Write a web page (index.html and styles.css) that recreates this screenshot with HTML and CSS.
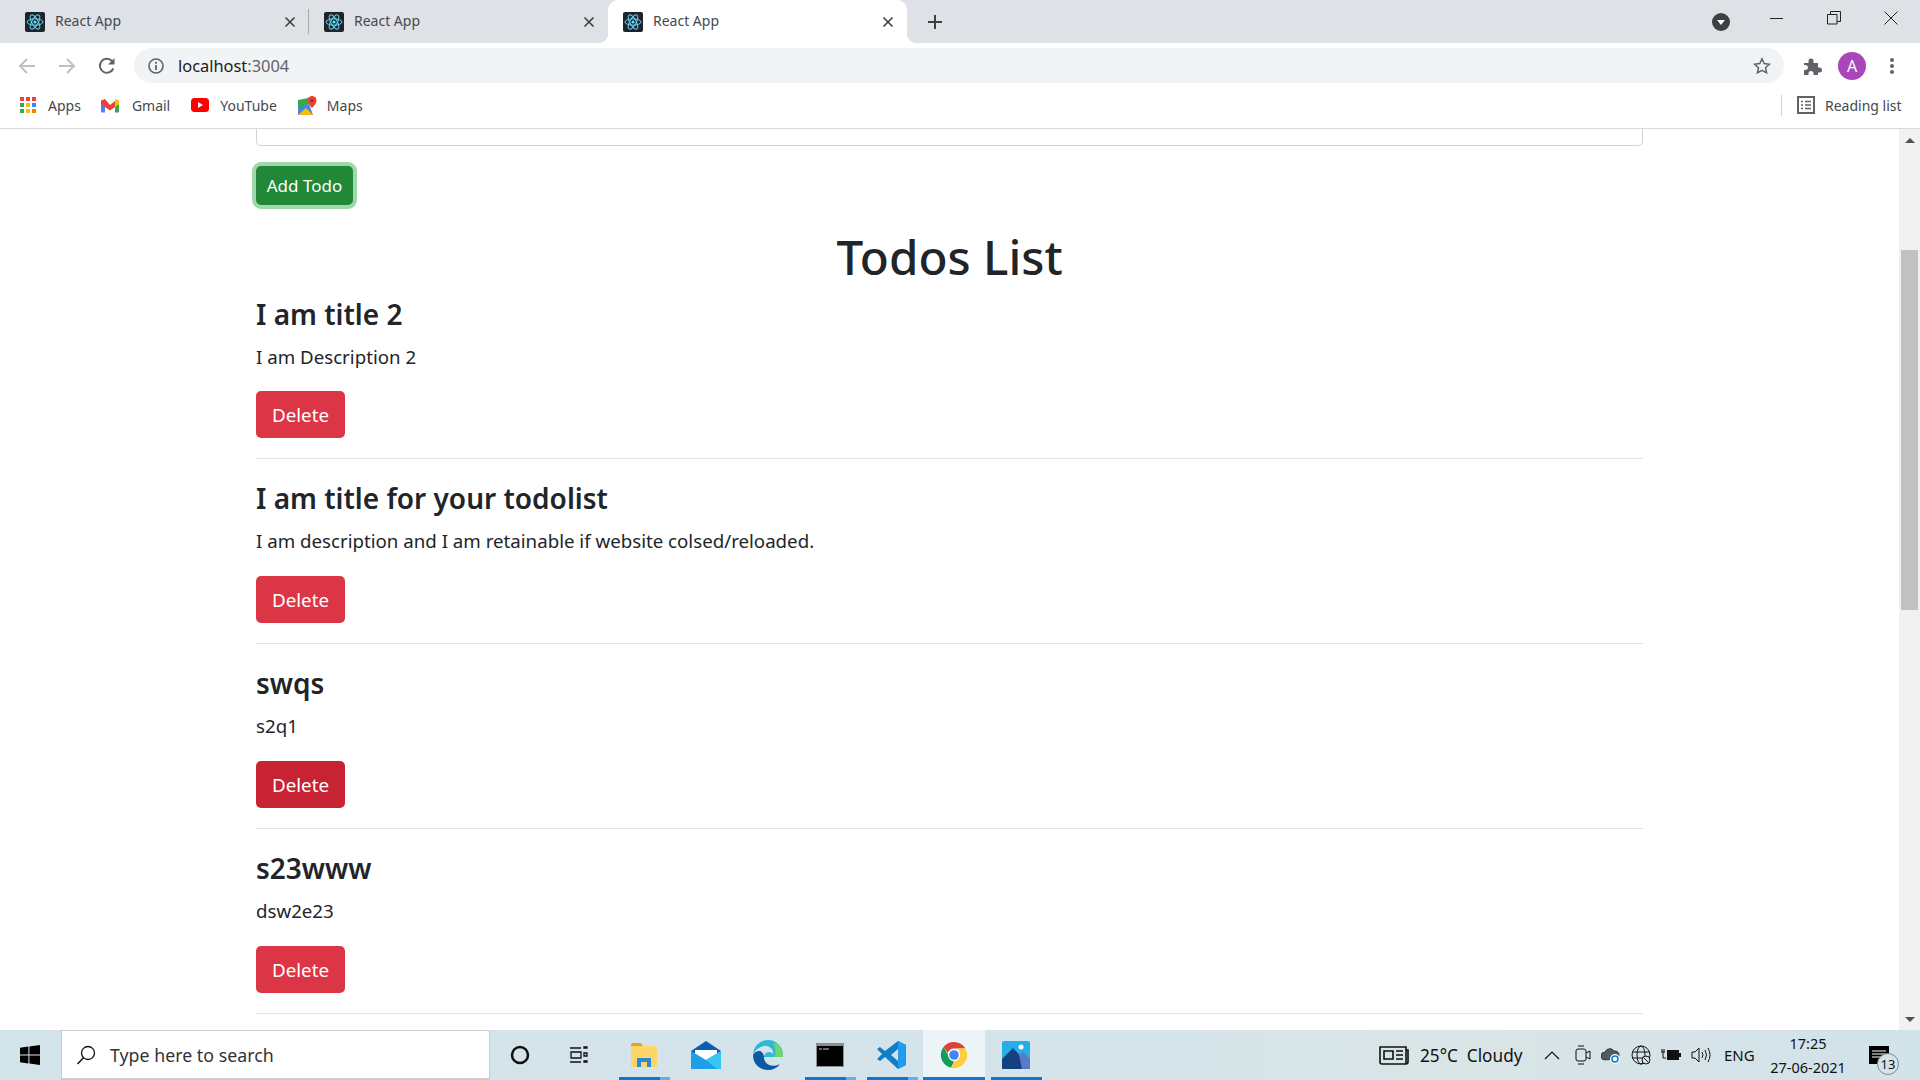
FILE: index.html
```html
<!DOCTYPE html>
<html lang="en">
<head>
  <meta charset="utf-8" />
  <title>React App</title>
  <link rel="stylesheet" href="styles.css">
</head>
<body>
  <svg class="defs" width="0" height="0">
    <symbol id="react" viewBox="0 0 20 20">
      <rect width="20" height="20" rx="2" fill="#20232a"/>
      <g fill="none" stroke="#61dafb" stroke-width="1">
        <ellipse cx="10" cy="10" rx="8" ry="3.2"/>
        <ellipse cx="10" cy="10" rx="8" ry="3.2" transform="rotate(60 10 10)"/>
        <ellipse cx="10" cy="10" rx="8" ry="3.2" transform="rotate(120 10 10)"/>
      </g>
      <circle cx="10" cy="10" r="1.6" fill="#61dafb"/>
    </symbol>
    <symbol id="tab-x" viewBox="0 0 12 12">
      <path d="M1.5 1.5l9 9M10.500 1.500l-9 9" stroke="#3c4043" stroke-width="1.6" fill="none"/>
    </symbol>
  </svg>

  <div class="tabstrip">
    <div class="tab tab-sep">
      <svg class="favicon"><use href="#react"/></svg>
      <span class="tab-title">React App</span>
      <svg class="tab-close"><use href="#tab-x"/></svg>
    </div>
    <div class="tab">
      <svg class="favicon"><use href="#react"/></svg>
      <span class="tab-title">React App</span>
      <svg class="tab-close"><use href="#tab-x"/></svg>
    </div>
    <div class="tab tab-active">
      <svg class="favicon"><use href="#react"/></svg>
      <span class="tab-title">React App</span>
      <svg class="tab-close"><use href="#tab-x"/></svg>
    </div>
    <svg class="new-tab" width="14" height="14" viewBox="0 0 14 14"><path d="M7 0v14M0 7h14" stroke="#3c4043" stroke-width="2"/></svg>
    <svg class="tab-search" width="18" height="18" viewBox="0 0 18 18"><circle cx="9" cy="9" r="9" fill="#3c4043"/><path d="M5 7h8l-4 5z" fill="#fff"/></svg>
    <div class="win-controls">
      <svg width="14" height="14" viewBox="0 0 14 14"><path d="M0 7.500h13" stroke="#222" stroke-width="1"/></svg>
      <svg width="14" height="14" viewBox="0 0 14 14"><path d="M.5 3.500h9.500v9.500h-9.500zM3.500 3.500v-3h10v10h-3.500" fill="none" stroke="#222" stroke-width="1"/></svg>
      <svg width="14" height="14" viewBox="0 0 14 14"><path d="M.5.500l13 13M13.500.500l-13 13" stroke="#222" stroke-width="1"/></svg>
    </div>
  </div>

  <div class="toolbar">
    <svg class="nav-icon" width="18" height="18" viewBox="0 0 18 18"><path d="M17 9H2M9 2L2 9l7 7" fill="none" stroke="#bdc1c6" stroke-width="2"/></svg>
    <svg class="nav-icon" width="18" height="18" viewBox="0 0 18 18"><path d="M1 9h15M9 2l7 7-7 7" fill="none" stroke="#bdc1c6" stroke-width="2"/></svg>
    <svg class="nav-icon" width="18" height="18" viewBox="0 0 18 18"><path d="M15.300 11.500A7 7 0 1 1 14 4l1.500 1.500" fill="none" stroke="#5f6368" stroke-width="2"/><path d="M16.500 1v6.500H10z" fill="#5f6368"/></svg>
    <div class="omnibox">
      <svg width="16" height="16" viewBox="0 0 16 16"><circle cx="8" cy="8" r="7" fill="none" stroke="#5f6368" stroke-width="1.6"/><path d="M8 7v5" stroke="#5f6368" stroke-width="1.800"/><circle cx="8" cy="4.800" r="1.100" fill="#5f6368"/></svg>
      <span class="url">localhost<span class="url-port">:3004</span></span>
      <svg class="star" width="18" height="18" viewBox="0 0 18 18"><path d="M9 1.800l2.200 4.800 5.200.600-3.900 3.500 1.100 5.200L9 13.300l-4.600 2.600 1.100-5.200L1.600 7.200l5.200-.600z" fill="none" stroke="#5f6368" stroke-width="1.500"/></svg>
    </div>
    <svg class="puzzle" width="20" height="20" viewBox="0 0 20 20"><path d="M1 7h4.500V5a2.500 2.500 0 0 1 5 0v2H15v4.500h1.500a2.500 2.500 0 0 1 0 5H15V19h-4.500v-1.500a2.500 2.500 0 0 0-5 0V19H1v-5h1.500a2.500 2.500 0 0 0 0-5H1z" fill="#5f6368"/></svg>
    <div class="avatar">A</div>
    <svg class="menu-dots" width="4" height="18" viewBox="0 0 4 18"><circle cx="2" cy="3" r="2" fill="#5f6368"/><circle cx="2" cy="9" r="2" fill="#5f6368"/><circle cx="2" cy="15" r="2" fill="#5f6368"/></svg>
  </div>

  <div class="bookmarks">
    <div class="bm bm-apps">
      <svg width="16" height="16" viewBox="0 0 16 16">
        <g fill="#ea4335"><rect width="4" height="4"/><rect x="6" width="4" height="4"/><rect x="12" width="4" height="4"/></g>
        <g><rect y="6" width="4" height="4" fill="#34a853"/><rect x="6" y="6" width="4" height="4" fill="#fbbc04"/><rect x="12" y="6" width="4" height="4" fill="#4285f4"/></g>
        <g><rect y="12" width="4" height="4" fill="#34a853"/><rect x="6" y="12" width="4" height="4" fill="#fbbc04"/><rect x="12" y="12" width="4" height="4" fill="#ea8600"/></g>
      </svg>
      <span>Apps</span>
    </div>
    <div class="bm bm-gmail">
      <svg width="18" height="15" viewBox="0 0 18 15">
        <path d="M0 2.500v11a1 1 0 0 0 1 1h3V6z" fill="#4285f4"/>
        <path d="M18 2.500v11a1 1 0 0 1-1 1h-3V6z" fill="#34a853"/>
        <path d="M14 1l4 1.500V6l-4 3z" fill="#fbbc04"/>
        <path d="M4 1L0 2.500V6l4 3 5 3.500L14 9V3L9 7z" fill="#ea4335"/>
      </svg>
      <span>Gmail</span>
    </div>
    <div class="bm bm-yt">
      <svg width="18" height="14" viewBox="0 0 18 14"><rect width="18" height="14" rx="3.500" fill="#f00"/><path d="M7 4l5 3-5 3z" fill="#fff"/></svg>
      <span>YouTube</span>
    </div>
    <div class="bm bm-maps">
      <svg width="19" height="19" viewBox="0 0 19 19">
        <path d="M0 4l10-2 3 4-13 10z" fill="#34a853"/>
        <path d="M0 13L11 8l4 11H0z" fill="#4285f4"/>
        <path d="M0 19l8-7 7 7z" fill="#fbbc04"/>
        <path d="M14 0a4.500 4.500 0 0 1 4.500 4.500C18.500 8 14 12 14 12S9.500 8 9.500 4.500A4.500 4.500 0 0 1 14 0z" fill="#ea4335"/>
        <circle cx="14" cy="4.500" r="1.500" fill="#a52714"/>
      </svg>
      <span>Maps</span>
    </div>
    <div class="reading">
      <svg width="18" height="18" viewBox="0 0 18 18"><rect x="1" y="1" width="16" height="16" fill="none" stroke="#5f6368" stroke-width="2"/><path d="M4 5.500h2M8 5.500h6M4 9h2M8 9h6M4 12.500h2M8 12.500h6" stroke="#5f6368" stroke-width="1.500"/></svg>
      <span>Reading list</span>
    </div>
  </div>

  <div class="viewport">
    <div class="page">
      <div class="todo-input"></div>
      <button class="btn btn-add">Add Todo</button>
      <h1 class="list-title">Todos List</h1>

      <div class="todo">
        <h4>I am title 2</h4>
        <p>I am Description 2</p>
        <button class="btn btn-delete">Delete</button>
      </div>
      <div class="todo">
        <h4>I am title for your todolist</h4>
        <p>I am description and I am retainable if website colsed/reloaded.</p>
        <button class="btn btn-delete">Delete</button>
      </div>
      <div class="todo">
        <h4>swqs</h4>
        <p>s2q1</p>
        <button class="btn btn-delete btn-hover">Delete</button>
      </div>
      <div class="todo">
        <h4>s23www</h4>
        <p>dsw2e23</p>
        <button class="btn btn-delete">Delete</button>
      </div>
    </div>
    <div class="scrollbar">
      <div class="sb-up"></div>
      <div class="sb-thumb"></div>
      <div class="sb-down"></div>
    </div>
  </div>

  <div class="taskbar">
    <svg class="start" width="20" height="20" viewBox="0 0 20 20"><path d="M0 2.800l8.400-1.200v8H0zM9.400 1.400L20 0v9.600H9.400zM0 10.600h8.400v8L0 17.300zM9.400 10.600H20V20L9.400 18.600z" fill="#000"/></svg>
    <div class="search-box">
      <svg width="20" height="20" viewBox="0 0 20 20"><circle cx="12" cy="8" r="6.500" fill="none" stroke="#111" stroke-width="1.300"/><path d="M7.500 12.800L1.500 19" stroke="#111" stroke-width="1.500"/></svg>
      <span>Type here to search</span>
    </div>
    <div class="task task-plain">
      <svg width="20" height="20" viewBox="0 0 20 20"><circle cx="10" cy="10" r="8" fill="none" stroke="#111" stroke-width="2.500"/></svg>
    </div>
    <div class="task task-plain">
      <svg width="20" height="20" viewBox="0 0 20 20"><path d="M1 3h11M1 17h11M2 7h10v6H2zM15 2h3v1h-3zM15 8h3v3h-3zM15 16h3v1h-3z" fill="none" stroke="#111" stroke-width="1.300"/></svg>
    </div>
    <div class="task task-open task-first">
      <svg width="28" height="26" viewBox="0 0 28 26">
        <path d="M1 3a2 2 0 0 1 2-2h8l2 3H1z" fill="#e3a21a"/>
        <path d="M1 4h25a1 1 0 0 1 1 1v19a1 1 0 0 1-1 1H2a1 1 0 0 1-1-1z" fill="#fcd669"/>
        <path d="M7 25v-9h14v9h-4v-5h-6v5z" fill="#2b88d8"/>
      </svg>
    </div>
    <div class="task">
      <svg width="30" height="28" viewBox="0 0 30 28">
        <path d="M0 10L15 0l15 10v3H0z" fill="#0a5db3"/>
        <path d="M4 9h22v8l-11 6-11-6z" fill="#fff"/>
        <path d="M0 10l15 9 15-9v18H0z" fill="#1e9fe8"/>
        <path d="M15 19l15-9v18H26z" fill="#37c6f4"/>
      </svg>
    </div>
    <div class="task">
      <svg width="30" height="30" viewBox="0 0 30 30">
        <path d="M15 0a15 15 0 0 1 15 15v2H11a5 5 0 0 1 9-3c1-5-5-9-9-8C5 7 1 12 0 15A15 15 0 0 1 15 0z" fill="#2fb8d9"/>
        <path d="M20 2a14 14 0 0 1 10 13v2h-9c3-3 1-10-1-15z" fill="#6fd66b"/>
        <path d="M0 15c0 9 7 15 15 15 5 0 9-2 12-6-7 4-16 1-16-7-1-8-8-7-11-2z" fill="#0c59a4"/>
      </svg>
    </div>
    <div class="task task-open">
      <svg width="28" height="24" viewBox="0 0 28 24">
        <rect width="28" height="24" fill="#8a8f92"/>
        <rect x="1" y="3" width="26" height="20" fill="#000"/>
        <path d="M3 6h3M7 6h6" stroke="#ccc" stroke-width="1"/>
      </svg>
    </div>
    <div class="task task-open">
      <svg width="30" height="30" viewBox="0 0 30 30">
        <path d="M21 1l8 4v20l-8 4-13-12-5 4-3-2 5-5-5-5 3-2 5 4z" fill="#0e7fc4"/>
        <path d="M21 1l8 4v20l-8 4V1z" fill="#1f9cf0"/>
        <path d="M21 9l-7 6 7 6z" fill="#d4e3ea"/>
      </svg>
    </div>
    <div class="task task-active">
      <svg width="28" height="28" viewBox="0 0 28 28">
        <path d="M14 1a13 13 0 0 1 11.300 6.500H14a6.500 6.500 0 0 0-6.200 4.500L3.600 6A13 13 0 0 1 14 1z" fill="#db4437"/>
        <path d="M3.600 6L9 15.500a6.500 6.500 0 0 0 5 5l-3 6.200A13 13 0 0 1 3.600 6z" fill="#0f9d58"/>
        <path d="M25.300 7.500A13 13 0 0 1 11 26.700l5.700-9.500a6.500 6.500 0 0 0 1-9.700z" fill="#ffcd40"/>
        <circle cx="14" cy="14" r="6" fill="#fff"/>
        <circle cx="14" cy="14" r="4.800" fill="#4285f4"/>
      </svg>
    </div>
    <div class="task task-photos">
      <svg width="28" height="28" viewBox="0 0 28 28">
        <rect width="28" height="28" rx="2" fill="#25aee8"/>
        <path d="M0 28V18L11 7l10 11v10z" fill="#14427f"/>
        <path d="M17 14l4-3 7 7v10H20z" fill="#5a79c9"/>
        <circle cx="19" cy="6" r="2.500" fill="#fff"/>
      </svg>
    </div>

    <div class="tray">
      <svg class="news" width="30" height="20" viewBox="0 0 30 20"><path d="M1 2h26v17H3a2 2 0 0 1-2-2zM27 5h2v12a2 2 0 0 1-2 2" fill="none" stroke="#111" stroke-width="1.600"/><path d="M5 6h9v8H5zM17 6h7M17 10h7M17 14h7" fill="none" stroke="#111" stroke-width="1.600"/></svg>
      <span class="weather">25°C&nbsp; Cloudy</span>
      <svg class="tray-icon chevron" width="16" height="10" viewBox="0 0 16 10"><path d="M1 9l7-7 7 7" fill="none" stroke="#111" stroke-width="1.200"/></svg>
      <svg class="tray-icon" width="16" height="20" viewBox="0 0 16 20"><rect x="1" y="4" width="10" height="12" rx="2" fill="none" stroke="#111"/><path d="M11 8l4-2v8l-4-2M3 1h6M3 19h6" fill="none" stroke="#111"/></svg>
      <svg class="tray-icon" width="20" height="20" viewBox="0 0 20 20"><path d="M4 15a4 4 0 0 1 0-8 5 5 0 0 1 9-1 4 4 0 0 1 2 8z" fill="#4f5b62" stroke="#111" stroke-width=".6"/><circle cx="14" cy="14" r="5" fill="#fff"/><circle cx="14" cy="14" r="3" fill="none" stroke="#0b78d4" stroke-width="1.500"/></svg>
      <svg class="tray-icon" width="20" height="20" viewBox="0 0 20 20"><g fill="none" stroke="#111"><circle cx="10" cy="10" r="9"/><ellipse cx="10" cy="10" rx="4" ry="9"/><path d="M1.500 7h17M1.500 13h17"/></g><circle cx="15" cy="15" r="4" fill="#d4e3ea" stroke="#111"/><path d="M12.500 12.500l5 5" stroke="#111"/></svg>
      <svg class="tray-icon" width="20" height="14" viewBox="0 0 20 14"><path d="M0 4h4M1 1v3M3 1v3M2 4v6h3" fill="none" stroke="#111"/><rect x="6" y="2" width="12" height="10" fill="#111"/><rect x="18" y="5" width="2" height="4" fill="#111"/></svg>
      <svg class="tray-icon" width="20" height="18" viewBox="0 0 20 18"><path d="M1 6h3l4-4v14l-4-4H1zM11 6q2 3 0 6M14 4q3 5 0 10M17 2q4 7 0 14" fill="none" stroke="#111"/></svg>
      <span class="lang">ENG</span>
      <div class="clock"><span>17:25</span><span>27-06-2021</span></div>
      <div class="notify">
        <svg width="20" height="18" viewBox="0 0 20 18"><path d="M0 0h20v18H0z" fill="#000"/><path d="M3 5h14M3 8h14M3 11h14" stroke="#fff"/></svg>
        <span class="notify-count">13</span>
      </div>
    </div>
  </div>
</body>
</html>
```

FILE: styles.css
```css
* {
  box-sizing: border-box;
}
html, body {
  margin: 0;
  height: 100%;
}
body {
  display: flex;
  flex-direction: column;
  width: 1920px;
  height: 1080px;
  overflow: hidden;
  font-family: "Noto Sans", "Open Sans", sans-serif;
  color: #212529;
  background: #fff;
}
.defs {
  position: absolute;
}
svg {
  flex: none;
  display: block;
}

/* tab strip */
.tabstrip {
  display: flex;
  align-items: center;
  height: 43px;
  padding-left: 10px;
  background: #dee1e6;
}
.tab {
  position: relative;
  display: flex;
  align-items: center;
  align-self: stretch;
  width: 299px;
  padding: 0 13px 0 15px;
  font-size: 14px;
  color: #45494d;
}
.tab-sep::after {
  content: "";
  position: absolute;
  right: 0;
  top: 9px;
  width: 1px;
  height: 25px;
  background: #a7a9ad;
}
.tab-active {
  background: #fff;
  border-radius: 10px 10px 0 0;
}
.tab-active::before,
.tab-active::after {
  content: "";
  position: absolute;
  bottom: 0;
  width: 10px;
  height: 10px;
}
.tab-active::before {
  left: -10px;
  background: radial-gradient(circle at 0 0, transparent 10px, #fff 10.5px);
}
.tab-active::after {
  right: -10px;
  background: radial-gradient(circle at 100% 0, transparent 10px, #fff 10.5px);
}
.favicon {
  width: 20px;
  height: 20px;
}
.tab-title {
  margin: 0 0 2px 10px;
  flex: 1;
}
.tab-close {
  width: 12px;
  height: 12px;
}
.new-tab {
  margin-left: 21px;
}
.tab-search {
  margin-left: 770px;
}
.win-controls {
  display: flex;
  align-items: center;
  gap: 43px;
  margin-left: 40px;
  margin-bottom: 8px;
}

/* toolbar */
.toolbar {
  display: flex;
  align-items: center;
  height: 43px;
  padding: 2px 0 0 18px;
  background: #fff;
}
.nav-icon {
  margin-right: 22px;
}
.nav-icon:nth-child(3) {
  margin-right: 18px;
}
.omnibox {
  display: flex;
  align-items: center;
  width: 1650px;
  height: 35px;
  padding: 0 13px 0 14px;
  border-radius: 18px;
  background: #f1f3f4;
}
.url {
  margin: 0 0 1px 14px;
  flex: 1;
  font-size: 16.400px;
  color: #202124;
}
.url-port {
  color: #5f6368;
}
.puzzle {
  margin-left: 19px;
}
.avatar {
  display: flex;
  align-items: center;
  justify-content: center;
  width: 28px;
  height: 28px;
  margin-left: 15px;
  border-radius: 50%;
  background: #a846ba;
  color: #fff;
  font-size: 16px;
}
.menu-dots {
  margin-left: 24px;
}

/* bookmarks */
.bookmarks {
  display: flex;
  align-items: center;
  height: 43px;
  padding-bottom: 4px;
  border-bottom: 1px solid #d9dadd;
  font-size: 14px;
  color: #45494d;
  background: #fff;
}
.bm {
  display: flex;
  align-items: center;
}
.bm-apps {
  margin-left: 20px;
}
.bm-apps span {
  margin-left: 12px;
}
.bm-gmail {
  margin-left: 20px;
}
.bm-gmail span {
  margin-left: 13px;
}
.bm-yt {
  margin-left: 21px;
}
.bm-yt span {
  margin-left: 11px;
}
.bm-maps {
  margin-left: 21px;
}
.bm-maps span {
  margin-left: 10px;
}
.reading {
  display: flex;
  align-items: center;
  margin-left: auto;
  height: 21px;
  width: 139px;
  padding-left: 15px;
  border-left: 1px solid #d0d2d5;
}
.reading span {
  margin-left: 10px;
}

/* page */
.viewport {
  flex: 1;
  display: flex;
  min-height: 0;
}
.page {
  flex: 1;
  padding: 0 256px 0 256px;
  overflow: hidden;
}
.todo-input {
  height: 17px;
  border: 1px solid #ced4da;
  border-top: 0;
  border-radius: 0 0 5px 5px;
}
.btn {
  display: block;
  border: 0;
  border-radius: 5px;
  color: #fff;
  font-family: inherit;
}
.btn-add {
  width: 97px;
  height: 39px;
  margin-top: 20px;
  background: #218838;
  font-size: 17px;
  box-shadow: 0 0 0 4px #a0d8ae;
}
.list-title {
  margin: 22px 0 9px;
  font-size: 47.600px;
  font-weight: 500;
  line-height: 60px;
  text-align: center;
}
.todo {
  height: 185px;
  border-bottom: 1px solid #e2e3e5;
}
.todo + .todo {
  padding-top: 21px;
}
.list-title + .todo {
  height: 163px;
}
.todo h4 {
  margin: 0 0 10px;
  font-size: 28px;
  font-weight: 600;
  line-height: 36px;
}
.todo p {
  margin: 0 0 20px;
  font-size: 18.700px;
  line-height: 30px;
}
.list-title + .todo p {
  margin-bottom: 19px;
}
.btn-delete {
  width: 89px;
  height: 47px;
  background: #dc3545;
  font-size: 18.800px;
}
.btn-hover {
  background: #c82333;
}

/* scrollbar */
.scrollbar {
  display: flex;
  flex-direction: column;
  align-items: center;
  width: 21px;
  background: #f1f1f1;
}
.sb-up {
  margin-top: 9px;
  border: 5px solid transparent;
  border-top: 0;
  border-bottom: 5px solid #505050;
}
.sb-thumb {
  width: 17px;
  height: 360px;
  margin-top: 107px;
  background: #c1c1c1;
}
.sb-down {
  margin-top: auto;
  margin-bottom: 8px;
  border: 5px solid transparent;
  border-bottom: 0;
  border-top: 5px solid #505050;
}

/* taskbar */
.taskbar {
  display: flex;
  align-items: stretch;
  height: 50px;
  background: linear-gradient(90deg, #d3e3ea, #d5e4ea 60%, #d9e5e6 75%, #d2e2ea);
  color: #111;
}
.start {
  align-self: center;
  margin: 0 21px 0 20px;
}
.search-box {
  display: flex;
  align-items: center;
  width: 429px;
  padding-left: 14px;
  background: #fff;
  border: 1px solid #ccc;
  border-bottom-width: 2px;
  font-size: 17.800px;
  color: #333;
}
.search-box span {
  margin-left: 14px;
}
.task {
  display: flex;
  align-items: center;
  justify-content: center;
  width: 62px;
  position: relative;
}
.task-plain {
  width: 59px;
}
.task-first {
  margin-left: 5px;
}
.task-open::after,
.task-photos::after {
  content: "";
  position: absolute;
  left: 6px;
  right: 5px;
  bottom: 0;
  height: 3px;
  background: linear-gradient(90deg, #0a78d4 80%, #6aaee6 80%);
}
.task-photos::after {
  background: #0a78d4;
}
.task-active {
  background: #edf4f7;
}
.task-active::after {
  content: "";
  position: absolute;
  left: 0;
  right: 0;
  bottom: 0;
  height: 3px;
  background: #0a78d4;
}
.tray {
  display: flex;
  align-items: center;
  margin-left: auto;
}
.news {
  margin-right: 11px;
}
.weather {
  width: 124px;
  font-size: 17.200px;
}
.tray-icon {
  margin-right: 10px;
}
.chevron {
  margin-right: 15px;
}
.lang {
  width: 32px;
  margin-left: 3px;
  font-size: 15px;
}
.clock {
  display: flex;
  flex-direction: column;
  align-items: center;
  gap: 4px;
  width: 92px;
  margin-left: 6px;
  font-size: 14.500px;
  line-height: 20px;
}
.notify {
  position: relative;
  width: 66px;
  padding-left: 15px;
}
.notify-count {
  position: absolute;
  left: 23px;
  top: 7px;
  width: 22px;
  height: 22px;
  border: 1px solid #888;
  border-radius: 50%;
  background: #d3e3ea;
  font-size: 13px;
  line-height: 20px;
  text-align: center;
}
```
